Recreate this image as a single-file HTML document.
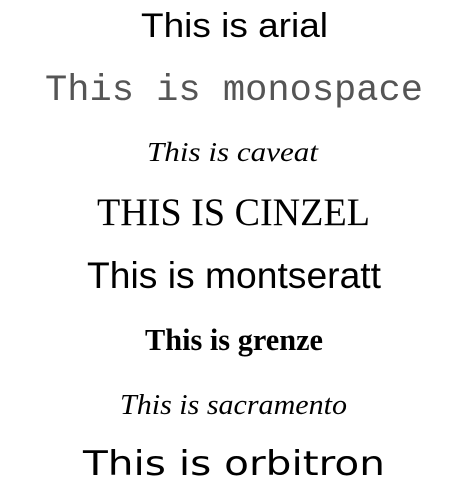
<!DOCTYPE html>
<html><head><meta charset="utf-8"><style>
html,body{margin:0;padding:0;background:#fff;width:471px;height:493px;overflow:hidden}
svg{display:block}
text{fill:#000}
</style></head><body>
<svg width="471" height="493" xmlns="http://www.w3.org/2000/svg">
<text x="141" y="37" font-family="Liberation Sans, sans-serif" font-size="34.5" textLength="187" lengthAdjust="spacingAndGlyphs">This is arial</text>
<text x="45" y="100" font-family="Liberation Mono, monospace" font-size="37" style="fill:#555" textLength="378" lengthAdjust="spacingAndGlyphs">This is monospace</text>
<text x="147" y="161" font-family="Liberation Serif, serif" font-style="italic" font-size="27" textLength="171" lengthAdjust="spacingAndGlyphs">This is caveat</text>
<text x="97" y="225" font-family="Liberation Serif, serif" font-size="39" textLength="273" lengthAdjust="spacingAndGlyphs">THIS IS CINZEL</text>
<text x="87" y="288" font-family="Liberation Sans, sans-serif" font-size="37" textLength="294" lengthAdjust="spacingAndGlyphs">This is montseratt</text>
<text x="145" y="350" font-family="Liberation Serif, serif" font-weight="bold" font-size="31" textLength="178" lengthAdjust="spacingAndGlyphs">This is grenze</text>
<text x="120" y="414" font-family="Liberation Serif, serif" font-style="italic" font-size="29" textLength="227" lengthAdjust="spacingAndGlyphs">This is sacramento</text>
<text x="83" y="475" font-family="DejaVu Sans, sans-serif" font-size="34" textLength="302" lengthAdjust="spacingAndGlyphs">This is orbitron</text>
</svg>
</body></html>
